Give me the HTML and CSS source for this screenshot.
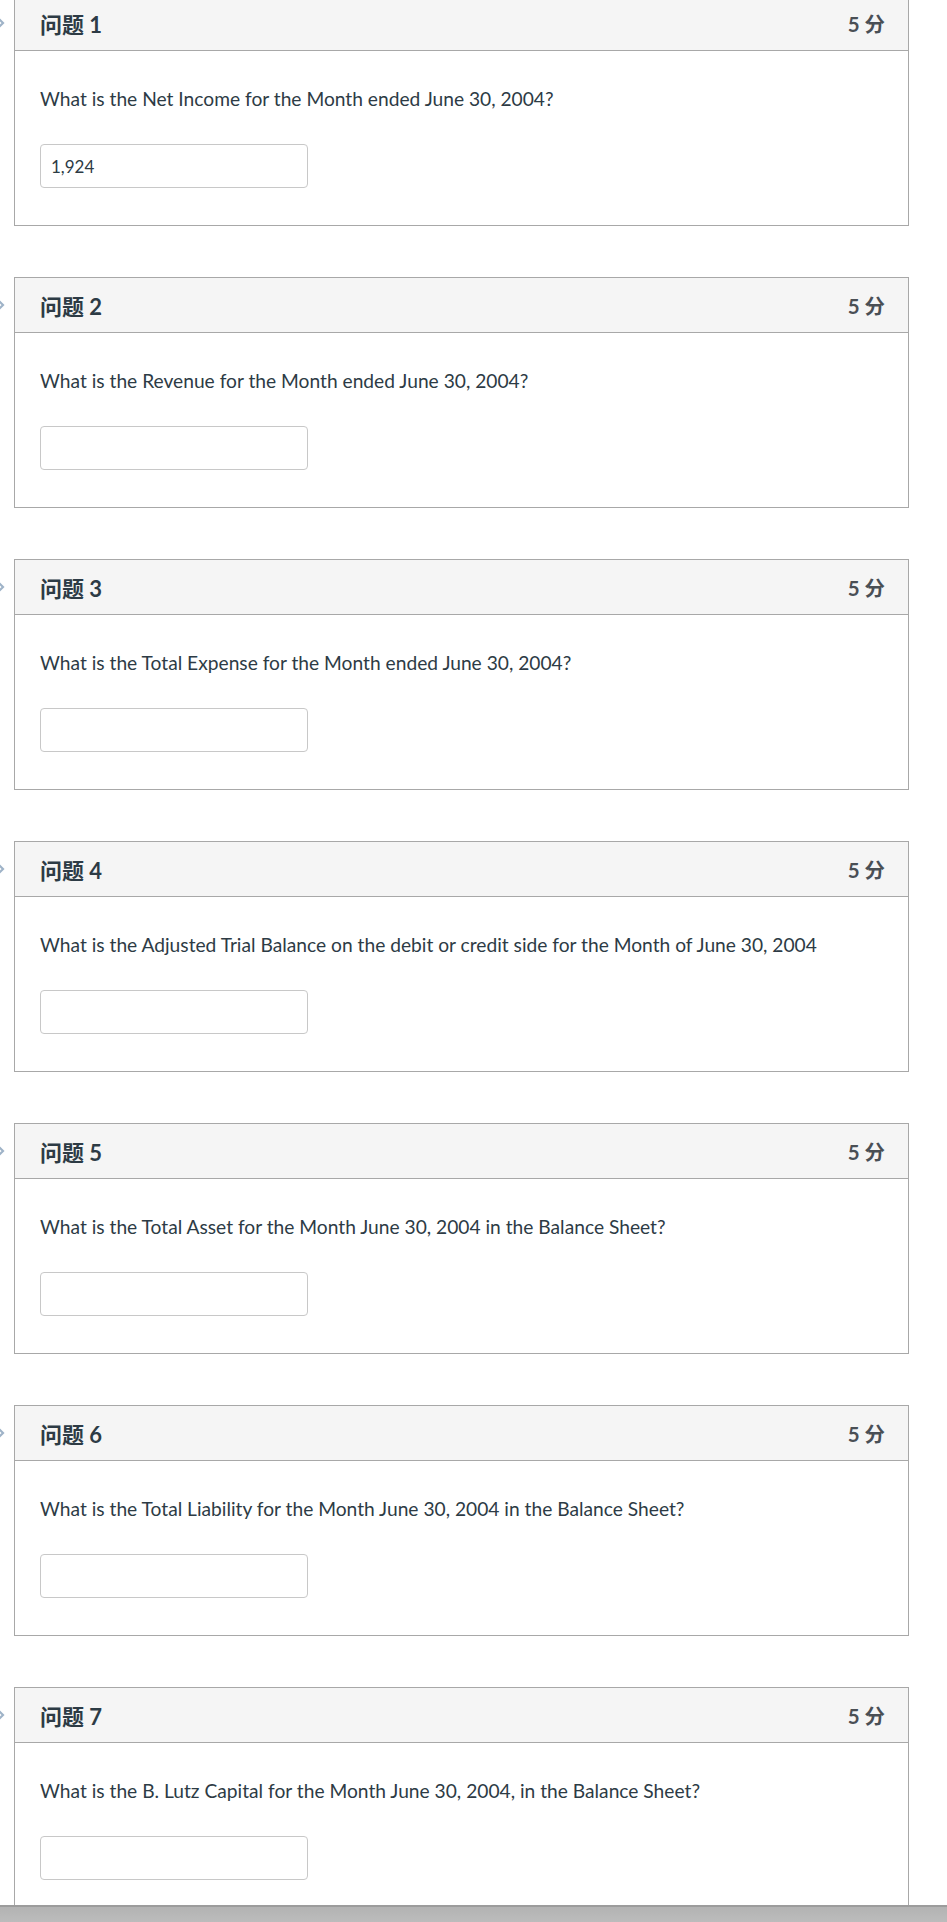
FILE: index.html
```html
<!DOCTYPE html>
<html lang="zh">
<head>
<meta charset="utf-8">
<title>Quiz</title>
<link rel="stylesheet" href="styles.css">
</head>
<body>
<div class="quiz">
  <div class="question">
    <svg class="chev" viewBox="0 0 10 16" width="10" height="16"><path d="M2 2 L8 8 L2 14" fill="none" stroke="#9fb3c8" stroke-width="2.2"/></svg>
    <div class="q-header"><span class="q-name">问题 1</span><span class="q-points">5 分</span></div>
    <div class="q-body">
      <p class="q-text">What is the Net Income for the Month ended June 30, 2004?</p>
      <input class="q-input" type="text" value="1,924">
    </div>
  </div>
  <div class="question">
    <svg class="chev" viewBox="0 0 10 16" width="10" height="16"><path d="M2 2 L8 8 L2 14" fill="none" stroke="#9fb3c8" stroke-width="2.2"/></svg>
    <div class="q-header"><span class="q-name">问题 2</span><span class="q-points">5 分</span></div>
    <div class="q-body">
      <p class="q-text">What is the Revenue for the Month ended June 30, 2004?</p>
      <input class="q-input" type="text" value="">
    </div>
  </div>
  <div class="question">
    <svg class="chev" viewBox="0 0 10 16" width="10" height="16"><path d="M2 2 L8 8 L2 14" fill="none" stroke="#9fb3c8" stroke-width="2.2"/></svg>
    <div class="q-header"><span class="q-name">问题 3</span><span class="q-points">5 分</span></div>
    <div class="q-body">
      <p class="q-text">What is the Total Expense for the Month ended June 30, 2004?</p>
      <input class="q-input" type="text" value="">
    </div>
  </div>
  <div class="question">
    <svg class="chev" viewBox="0 0 10 16" width="10" height="16"><path d="M2 2 L8 8 L2 14" fill="none" stroke="#9fb3c8" stroke-width="2.2"/></svg>
    <div class="q-header"><span class="q-name">问题 4</span><span class="q-points">5 分</span></div>
    <div class="q-body">
      <p class="q-text">What is the Adjusted Trial Balance on the debit or credit side for the Month of June 30, 2004</p>
      <input class="q-input" type="text" value="">
    </div>
  </div>
  <div class="question">
    <svg class="chev" viewBox="0 0 10 16" width="10" height="16"><path d="M2 2 L8 8 L2 14" fill="none" stroke="#9fb3c8" stroke-width="2.2"/></svg>
    <div class="q-header"><span class="q-name">问题 5</span><span class="q-points">5 分</span></div>
    <div class="q-body">
      <p class="q-text">What is the Total Asset for the Month June 30, 2004 in the Balance Sheet?</p>
      <input class="q-input" type="text" value="">
    </div>
  </div>
  <div class="question">
    <svg class="chev" viewBox="0 0 10 16" width="10" height="16"><path d="M2 2 L8 8 L2 14" fill="none" stroke="#9fb3c8" stroke-width="2.2"/></svg>
    <div class="q-header"><span class="q-name">问题 6</span><span class="q-points">5 分</span></div>
    <div class="q-body">
      <p class="q-text">What is the Total Liability for the Month June 30, 2004 in the Balance Sheet?</p>
      <input class="q-input" type="text" value="">
    </div>
  </div>
  <div class="question">
    <svg class="chev" viewBox="0 0 10 16" width="10" height="16"><path d="M2 2 L8 8 L2 14" fill="none" stroke="#9fb3c8" stroke-width="2.2"/></svg>
    <div class="q-header"><span class="q-name">问题 7</span><span class="q-points">5 分</span></div>
    <div class="q-body">
      <p class="q-text">What is the B. Lutz Capital for the Month June 30, 2004, in the Balance Sheet?</p>
      <input class="q-input" type="text" value="">
    </div>
  </div>
</div>
<div class="bottom-bar"></div>
</body>
</html>
```
FILE: styles.css
```css
html, body {
  margin: 0;
  padding: 0;
  background: #ffffff;
}
body {
  font-family: Lato, "Noto Sans CJK SC", sans-serif;
  color: #2d3b45;
  overflow: hidden;
}
.quiz {
  display: flex;
  flex-direction: column;
  gap: 51px;
  margin-top: -5px;
  padding-left: 14px;
  width: 895px;
}
.question {
  position: relative;
  border: 1px solid #a8a8a8;
  background: #fff;
}
.chev {
  position: absolute;
  left: -20px;
  top: 19px;
}
.q-header {
  height: 54px;
  background: #f5f5f5;
  border-bottom: 1px solid #a8a8a8;
  display: flex;
  align-items: center;
  justify-content: space-between;
  padding: 0 23px 0 25px;
}
.q-name {
  font-family: Lato, "Noto Sans CJK SC", sans-serif;
  font-weight: 700;
  font-size: 22px;
  color: #2d3b45;
}
.q-points {
  font-family: Lato, "Noto Sans CJK SC", sans-serif;
  font-weight: 700;
  font-size: 20.5px;
  color: #4a4f55;
}
.q-body {
  height: 174px;
  box-sizing: border-box;
  padding: 34px 24px 0 25px;
}
.q-text {
  margin: 0;
  font-size: 19.2px;
  line-height: 28px;
  color: #2d3b45;
}
.q-input {
  display: block;
  margin-top: 31px;
  box-sizing: border-box;
  width: 268px;
  height: 44px;
  border: 1px solid #c8c8c8;
  border-radius: 4px;
  padding: 0 10px;
  font-family: Lato, sans-serif;
  font-size: 17px;
  color: #2d3b45;
  background: #fff;
  outline: none;
}
.bottom-bar {
  position: fixed;
  left: 0;
  right: 0;
  bottom: 0;
  height: 17px;
  border-top: 2px solid #9c9c9c;
  box-sizing: border-box;
  background: linear-gradient(#b3b3b3, #bcbcbc);
}
```
